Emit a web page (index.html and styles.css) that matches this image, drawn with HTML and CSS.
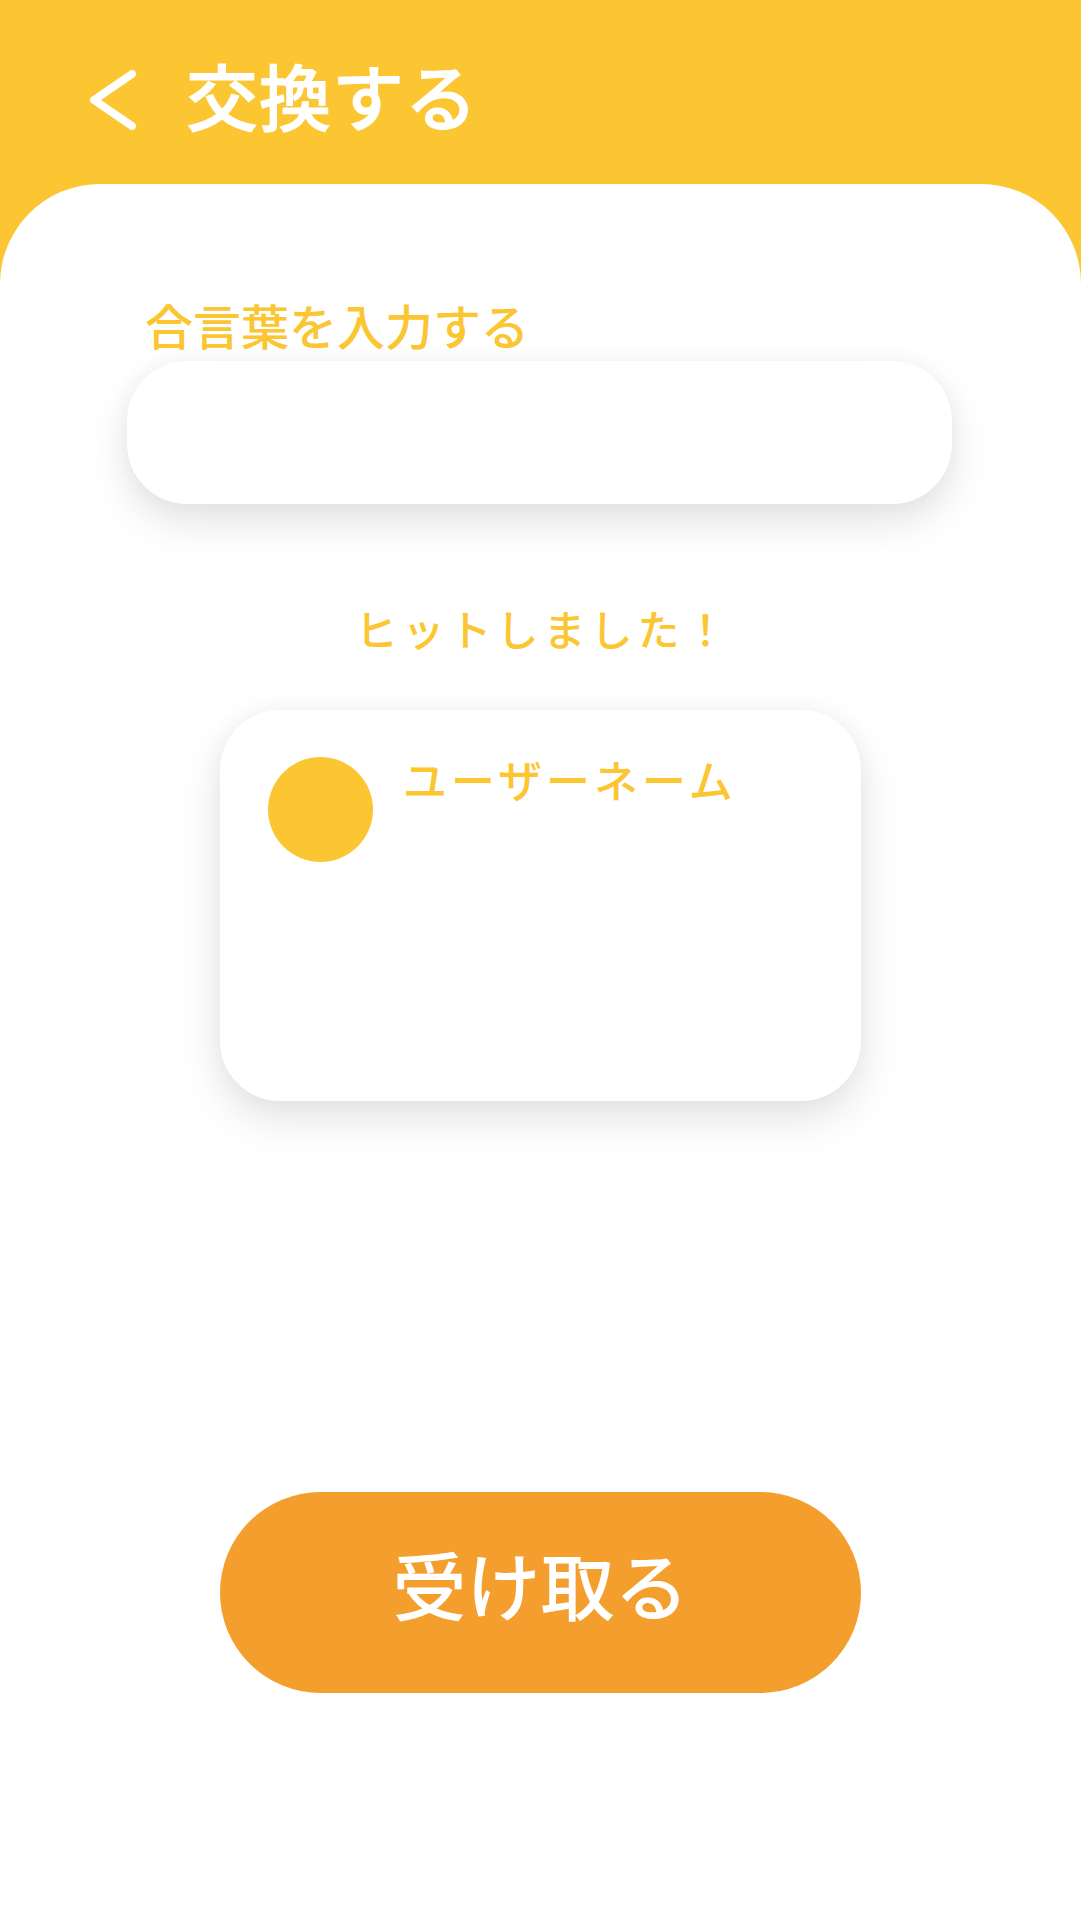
FILE: index.html
```html
<!DOCTYPE html>
<html lang="ja">
<head>
<meta charset="utf-8">
<title>交換する</title>
<link rel="stylesheet" href="styles.css">
</head>
<body>
<div class="screen">
  <header class="topbar">
    <svg class="back" width="48" height="60" viewBox="0 0 48 60" aria-hidden="true">
      <path d="M42 4 L4 30 L42 56" fill="none" stroke="#ffffff" stroke-width="8" stroke-linecap="round" stroke-linejoin="round"/>
    </svg>
    <h1 class="title">交換する</h1>
  </header>
  <main class="panel">
    <label class="label" for="pw">合言葉を入力する</label>
    <div class="input-wrap"><input id="pw" class="input" type="text"></div>
    <p class="hit">ヒットしました！</p>
    <section class="card">
      <div class="avatar"></div>
      <div class="name">ユーザーネーム</div>
    </section>
    <button class="receive" type="button">受け取る</button>
  </main>
</div>
</body>
</html>
```

FILE: styles.css
```css
* { box-sizing: border-box; }
html, body {
  margin: 0;
  padding: 0;
}
body {
  width: 1081px;
  height: 1921px;
  background: #fbc631;
  font-family: "Noto Sans CJK JP", "Noto Sans", sans-serif;
  overflow: hidden;
}
.screen {
  display: flex;
  flex-direction: column;
  height: 1921px;
}
.topbar {
  height: 184px;
  display: flex;
  align-items: center;
  padding-left: 90px;
  padding-top: 4px;
  flex-shrink: 0;
}
.back {
  display: block;
  margin-top: 11px;
}
.title {
  margin: 0 0 0 48px;
  color: #ffffff;
  font-size: 72px;
  font-weight: 500;
  line-height: 1;
  letter-spacing: 1px;
  -webkit-text-stroke: 1px #ffffff;
}
.panel {
  flex: 1;
  background: #ffffff;
  border-radius: 100px 100px 0 0;
  display: flex;
  flex-direction: column;
  align-items: center;
}
.label {
  align-self: flex-start;
  margin: 116px 0 0 145px;
  color: #fbc631;
  font-size: 48px;
  font-weight: 500;
  line-height: 1;
}
.input-wrap {
  align-self: flex-start;
  margin: 13px 0 0 127px;
  width: 825px;
  height: 143px;
  border-radius: 60px;
  background: #ffffff;
  box-shadow: 0 18px 40px rgba(0, 0, 0, 0.11), 0 0 22px rgba(0, 0, 0, 0.04);
}
.input {
  width: 100%;
  height: 100%;
  border: none;
  outline: none;
  background: transparent;
  border-radius: 60px;
  padding: 0 50px;
  font-family: inherit;
  font-size: 44px;
  color: #555;
}
.hit {
  margin: 103px 0 0 0;
  padding-left: 6px;
  color: #fbc631;
  font-size: 42px;
  font-weight: 500;
  line-height: 1;
  letter-spacing: 5px;
}
.card {
  margin-top: 61px;
  width: 641px;
  height: 391px;
  border-radius: 60px;
  background: #ffffff;
  box-shadow: 0 18px 44px rgba(0, 0, 0, 0.11), 0 0 24px rgba(0, 0, 0, 0.04);
  display: flex;
  align-items: flex-start;
  padding: 47px 48px;
  gap: 30px;
}
.avatar {
  width: 105px;
  height: 105px;
  border-radius: 50%;
  background: #fbc631;
  flex-shrink: 0;
}
.name {
  color: #fbc631;
  font-size: 44px;
  font-weight: 500;
  line-height: 1;
  letter-spacing: 4px;
}
.receive {
  margin-top: 391px;
  width: 641px;
  height: 201px;
  border: none;
  border-radius: 101px;
  background: #f39e2d;
  color: #ffffff;
  font-family: inherit;
  font-size: 74px;
  font-weight: 500;
  line-height: 1;
  padding: 0 0 20px 0;
  cursor: pointer;
}
```
